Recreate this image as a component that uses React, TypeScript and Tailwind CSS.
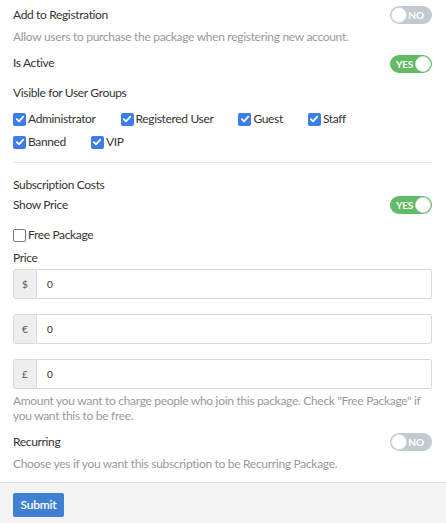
import React from "react";

const font = { fontFamily: "Lato, 'Open Sans', sans-serif" };

function Toggle({ on }: { on: boolean }) {
  return on ? (
    <div className="relative w-[42px] h-[18px] rounded-full bg-[#62bb65] flex items-center">
      <span className="pl-[6px] text-[10px] font-bold text-white leading-none tracking-[-0.2px]">YES</span>
      <span className="absolute right-[1px] top-[1px] w-[16px] h-[16px] rounded-full bg-white border border-[#d9dfe2]" />
    </div>
  ) : (
    <div className="relative w-[42px] h-[18px] rounded-full bg-[#bfcbd1] flex items-center justify-end">
      <span className="pr-[8px] text-[10px] font-bold text-white leading-none">NO</span>
      <span className="absolute left-[1px] top-[1px] w-[16px] h-[16px] rounded-full bg-white border border-[#d9dfe2]" />
    </div>
  );
}

function Check({ checked, label }: { checked: boolean; label: string }) {
  return (
    <div className="flex items-center h-[16px]">
      {checked ? (
        <span className="w-[13px] h-[13px] rounded-[2px] bg-[#3b7de9] flex items-center justify-center">
          <svg width="10" height="10" viewBox="0 0 10 10">
            <path d="M1.8 5.2 L4 7.4 L8.3 2.6" fill="none" stroke="white" strokeWidth="1.8" strokeLinecap="round" strokeLinejoin="round" />
          </svg>
        </span>
      ) : (
        <span className="w-[13px] h-[13px] rounded-[2px] border border-[#767676] bg-white" />
      )}
      <span className="ml-[2px] text-[12px] tracking-[-0.35px] text-[#333] leading-[16px]">{label}</span>
    </div>
  );
}

function PriceInput({ sym, className }: { sym: string; className: string }) {
  return (
    <div className={"flex h-[30px] " + className}>
      <div className="w-[24px] flex items-center justify-center bg-[#eeeeee] border border-[#d2dcdf] rounded-l-[3px] text-[10px] text-[#555]">
        {sym}
      </div>
      <div className="flex-1 flex items-center border border-l-0 border-[#d2dcdf] rounded-r-[3px] bg-white pl-[10px] text-[10px] text-[#333]">
        0
      </div>
    </div>
  );
}

const label = "text-[12px] tracking-[-0.35px] text-[#333]";
const desc = "text-[12px] tracking-[-0.3px] text-[#999]";

export default function App() {
  return (
    <div className="w-[446px] h-[523px] bg-white flex flex-col" style={font}>
      <div className="pl-[13px] pr-[14px] pt-[6px] flex flex-col">
        <div className="h-[18px] flex items-center justify-between">
          <span className={label}>Add to Registration</span>
          <Toggle on={false} />
        </div>
        <div className={"mt-[5px] h-[16px] leading-[16px] " + desc}>
          Allow users to purchase the package when registering new account.
        </div>
        <div className="mt-[10px] h-[18px] flex items-center justify-between">
          <span className={label + " -mt-[3px]"}>Is Active</span>
          <Toggle on={true} />
        </div>
        <div className={"mt-[12px] h-[16px] leading-[16px] " + label}>Visible for User Groups</div>
        <div className="mt-[10px] flex gap-x-[25px]">
          <Check checked label="Administrator" />
          <Check checked label="Registered User" />
          <Check checked label="Guest" />
          <Check checked label="Staff" />
        </div>
        <div className="mt-[7px] flex gap-x-[25px]">
          <Check checked label="Banned" />
          <Check checked label="VIP" />
        </div>
        <div className="mt-[12px] h-px bg-[#e6eaeb]" />
        <div className={"mt-[14px] h-[16px] leading-[16px] " + label}>Subscription Costs</div>
        <div className="mt-[3px] h-[18px] flex items-center justify-between">
          <span className={label}>Show Price</span>
          <Toggle on={true} />
        </div>
        <div className="mt-[13px]">
          <Check checked={false} label="Free Package" />
        </div>
        <div className={"mt-[7px] h-[16px] leading-[16px] " + label}>Price</div>
        <PriceInput sym="$" className="mt-[3px]" />
        <PriceInput sym="€" className="mt-[15px]" />
        <PriceInput sym="£" className="mt-[15px]" />
        <div className={"mt-[4px] leading-[15px] " + desc}>
          Amount you want to charge people who join this package. Check "Free Package" if you want this to be free.
        </div>
        <div className="mt-[10px] h-[18px] flex items-center justify-between">
          <span className={label}>Recurring</span>
          <Toggle on={false} />
        </div>
        <div className={"mt-[5px] h-[16px] leading-[16px] " + desc}>
          Choose yes if you want this subscription to be Recurring Package.
        </div>
      </div>
      <div className="mt-[10px] flex-1 border-t border-[#dddddd] bg-[#f4f4f4] pl-[13px] pt-[8px]">
        <button className="w-[51px] h-[24px] rounded-[2px] bg-[#3f80d2] text-white text-[12px] font-semibold tracking-[-0.2px]">
          Submit
        </button>
      </div>
    </div>
  );
}
